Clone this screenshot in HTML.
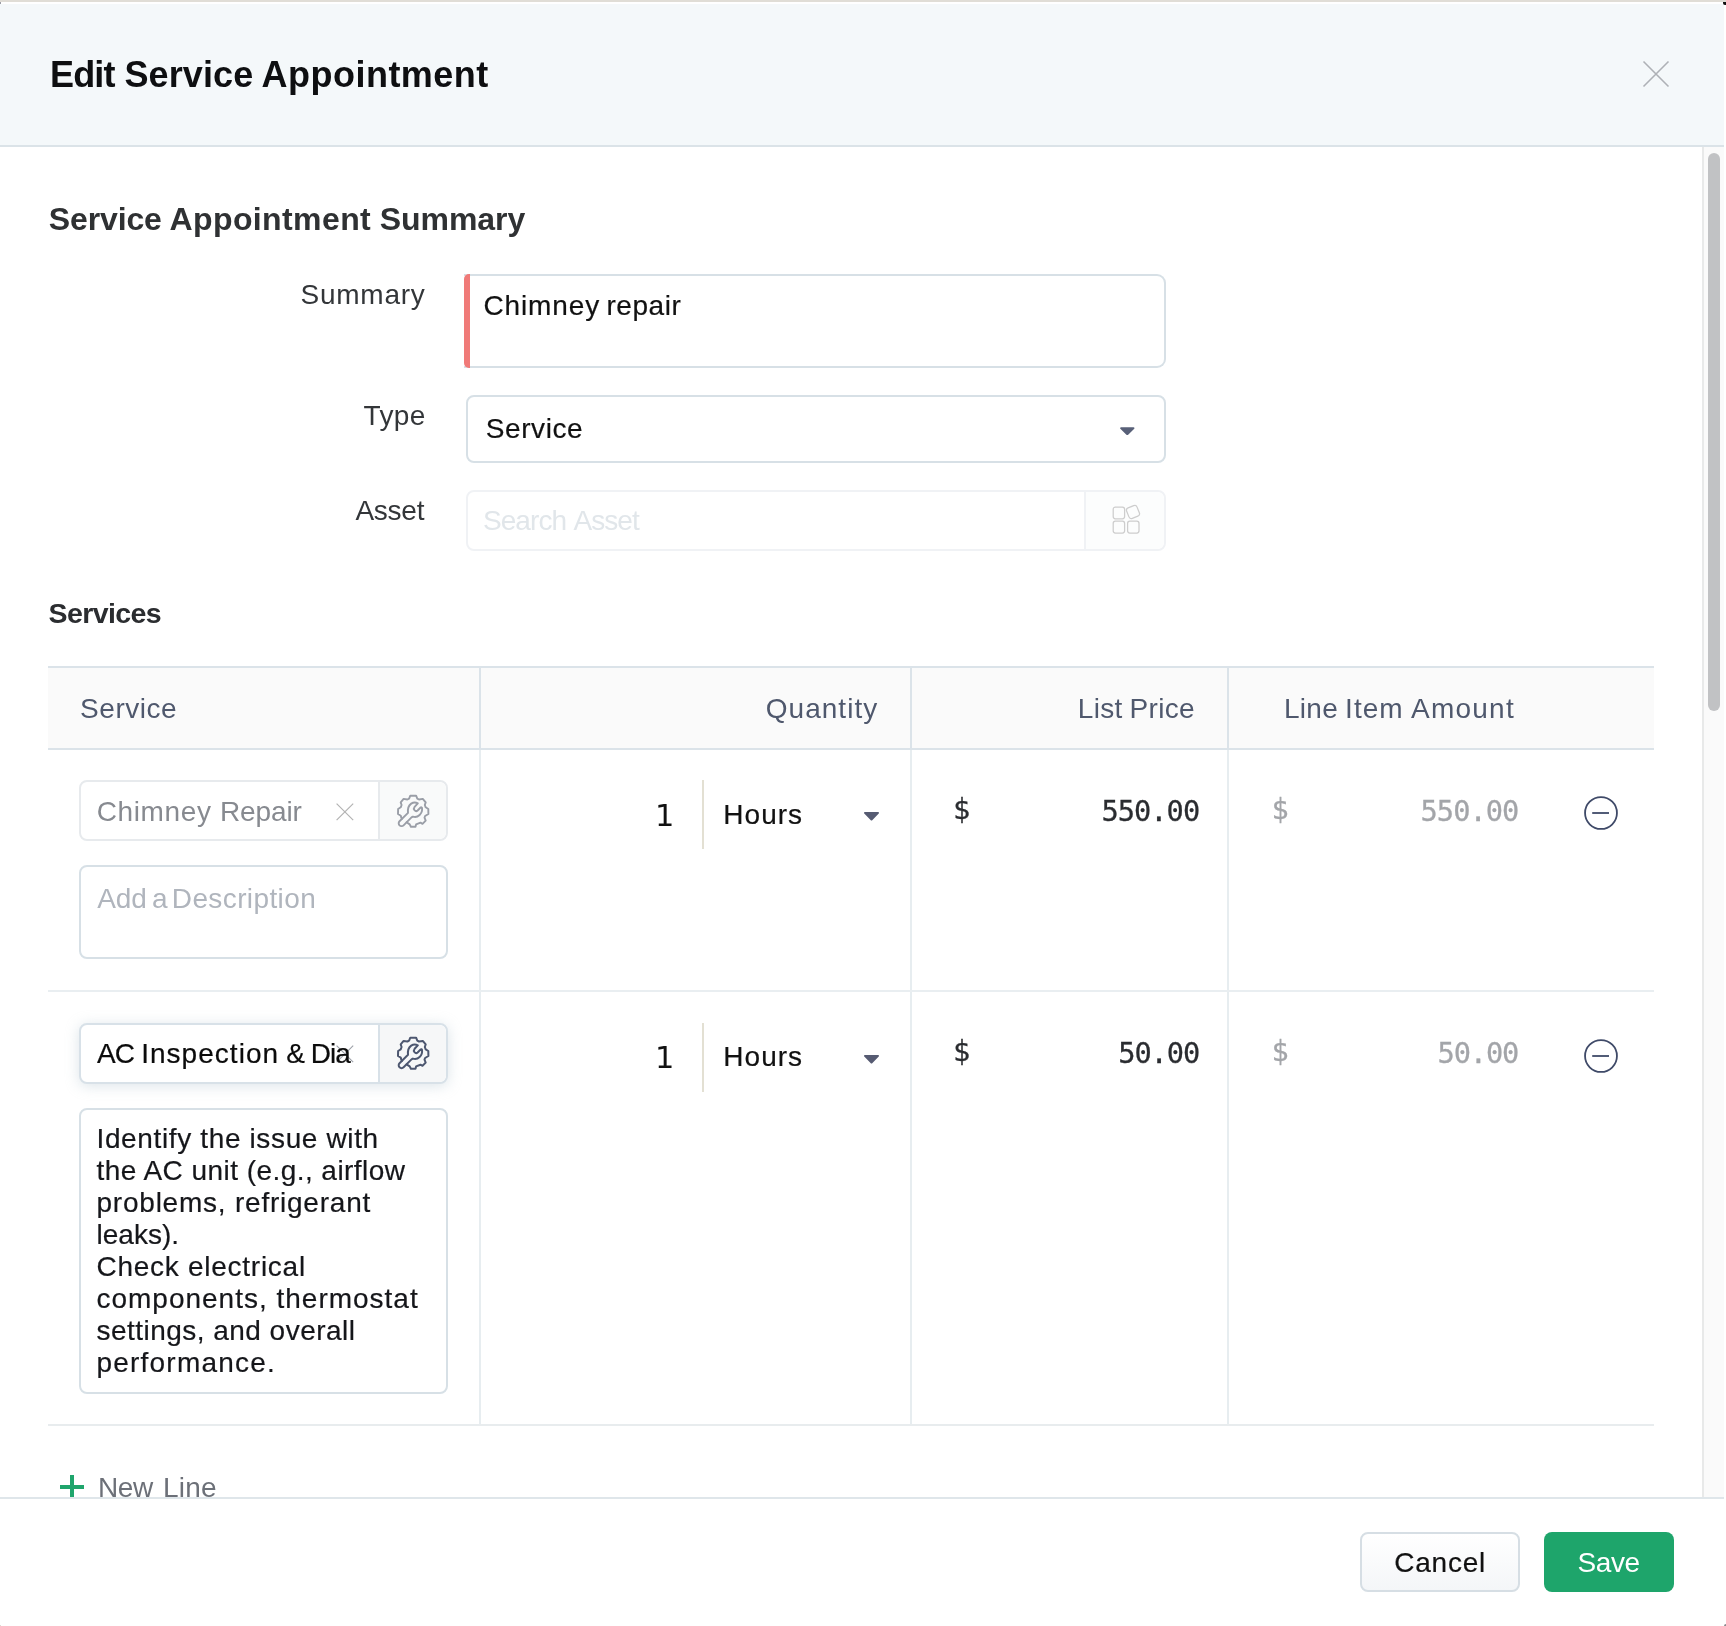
<!DOCTYPE html>
<html lang="en">
<head>
<meta charset="utf-8">
<title>Edit Service Appointment</title>
<style>
*{box-sizing:border-box;margin:0;padding:0}
html,body{width:1726px;height:1626px;overflow:hidden;background:#fff}
body{position:relative;font-family:"Liberation Sans",sans-serif;will-change:transform}
.a{position:absolute}
.g{position:absolute;left:0;top:0;width:0;height:0}
.t{position:absolute;white-space:pre;font-family:"Liberation Sans",sans-serif}
.m{font-family:"DejaVu Sans Mono","Liberation Mono",monospace}
.d{font-family:"DejaVu Sans","Liberation Sans",sans-serif}
.box{position:absolute;border:2px solid #d7e0e6;border-radius:8px;background:#fff}
svg{position:absolute;overflow:visible}
</style>
</head>
<body>
<header>
<div class="a" style="left:0px;top:0px;width:1726px;height:2px;background:#e0ddd6"></div>
<div class="a" style="left:0px;top:4px;width:1724px;height:141px;background:#f4f8fa"></div>
<div class="a" style="left:0px;top:145px;width:1724px;height:2px;background:#dbe3e8"></div>
<div class="a" style="left:1723px;top:2px;width:3px;height:3px;background:#111;border-radius:0 0 0 2px"></div>
<div class="a" style="left:0px;top:2px;width:1px;height:2px;background:#9a9ca4"></div>
<svg style="left:1643px;top:61px" width="26" height="26" viewBox="0 0 26 26"><path d="M0.5 0.5L25.5 25.5M25.5 0.5L0.5 25.5" stroke="#aeb1b6" stroke-width="1.6" fill="none"/></svg>
<div class="g"><span class="t" style="left:49.90px;top:54px;font-size:36px;line-height:41px;font-weight:bold;color:#0e0f11;letter-spacing:-0.768px;">Edit</span> <span class="t" style="left:124.40px;top:54px;font-size:36px;line-height:41px;font-weight:bold;color:#0e0f11;letter-spacing:0.119px;">Service</span> <span class="t" style="left:261.60px;top:54px;font-size:36px;line-height:41px;font-weight:bold;color:#0e0f11;letter-spacing:0.473px;">Appointment</span></div>
</header>
<main>
<div class="a" style="left:1702px;top:147px;width:22px;height:1351px;background:#fafafa;border-left:2px solid #e8e9e9"></div>
<div class="a" style="left:1708px;top:153px;width:12px;height:558px;background:#c1c2c4;border-radius:6px"></div>
<div class="box" style="left:464px;top:274px;width:702px;height:94px;border-left:0;border-radius:0 9px 9px 0"></div>
<div class="a" style="left:464px;top:274px;width:6px;height:94px;background:#f07a78;border-radius:5px 0 0 5px"></div>
<div class="box" style="left:466px;top:395px;width:700px;height:68px;"></div>
<svg style="left:1119.4px;top:426.2px" width="16.6" height="10.2" viewBox="0 0 18 11"><path d="M2.2 1.2h13.6a1 1 0 0 1 .75 1.65l-6.6 6.5a1.3 1.3 0 0 1-1.9 0l-6.6-6.5a1 1 0 0 1 .75-1.65z" fill="#586078"/></svg>
<div class="box" style="left:466px;top:490px;width:700px;height:61px;border-color:#f0f2f5;background:#fff"></div>
<div class="a" style="left:1084px;top:492px;width:80px;height:57px;background:#fcfdfd;border-left:2px solid #f0f2f5;border-radius:0 7px 7px 0"></div>
<svg style="left:1112px;top:505px" width="29" height="30" viewBox="0 0 29 30" fill="none" stroke="#cdcdcd" stroke-width="1.25"><rect x="1.2" y="2" width="11.4" height="11.8" rx="2.2"/><rect x="1.2" y="16.2" width="11.4" height="11.8" rx="2.2"/><rect x="15.6" y="16.2" width="11.4" height="11.8" rx="2.2"/><rect x="15.4" y="1.4" width="11.2" height="11.2" rx="2.6" transform="rotate(-22 21 7)"/></svg>
<div class="a" style="left:48px;top:666px;width:1606px;height:2px;background:#dbe3e9"></div>
<div class="a" style="left:48px;top:668px;width:1606px;height:80px;background:#fafafa"></div>
<div class="a" style="left:48px;top:748px;width:1606px;height:2px;background:#dbe3e9"></div>
<div class="a" style="left:479px;top:668px;width:2px;height:80px;background:#dbe3e9"></div>
<div class="a" style="left:479px;top:750px;width:2px;height:675px;background:#e7edf0"></div>
<div class="a" style="left:910px;top:668px;width:2px;height:80px;background:#dbe3e9"></div>
<div class="a" style="left:910px;top:750px;width:2px;height:675px;background:#e7edf0"></div>
<div class="a" style="left:1227px;top:668px;width:2px;height:80px;background:#dbe3e9"></div>
<div class="a" style="left:1227px;top:750px;width:2px;height:675px;background:#e7edf0"></div>
<div class="a" style="left:48px;top:990px;width:1606px;height:2px;background:#e9eef1"></div>
<div class="a" style="left:48px;top:1424px;width:1606px;height:2px;background:#e8ecee"></div>
<div class="box" style="left:79px;top:780px;width:369px;height:61px;border-color:#e7eaed;"></div>
<div class="a" style="left:378px;top:782px;width:68px;height:57px;background:#f9fafa;border-left:2px solid #e7eaed;border-radius:0 7px 7px 0"></div>
<div class="box" style="left:79px;top:1023px;width:369px;height:61px;border-color:#d8e1e8;box-shadow:0 2px 14px rgba(172,190,203,.42);"></div>
<div class="a" style="left:378px;top:1025px;width:68px;height:57px;background:#f6f7f8;border-left:2px solid #d8e1e8;border-radius:0 7px 7px 0"></div>
<svg style="left:396.6px;top:795.2px" width="33" height="33" viewBox="0 0 33 33" fill="none" stroke="#9a9ea7" stroke-width="1.9" stroke-linejoin="round" stroke-linecap="round"><path d="M9.6 27.3 L12.7 29.4 L13.9 31.7 L18.5 31.7 L19.1 29.4 L23.5 27.7 L25.5 28.8 L28.7 25.6 L27.5 22.7 L28.1 21.0 L31.4 19.0 L31.3 14.0 L28.7 12.3 L27.8 10.0 L28.7 7.4 L25.8 3.9 L22.0 4.5 L20.3 3.6 L19.1 0.7 L13.3 0.7 L12.1 3.6 L10.4 4.5 L6.6 3.9 L3.7 7.4 L4.6 10.0 L3.7 12.3 L1.1 14.0 L1.0 19.0 L3.8 20.7 L4.3 22.7 L5.0 23.8"/><path d="M2.53 26.28 L11 17.8 C10.6 14 11.5 10.5 14.2 8.6 C16.2 7.3 18.8 7.2 20.8 8.4 L17.6 11.8 C16.8 12.8 16.8 14.3 17.5 15.2 C18.3 16.1 19.8 16.2 20.6 15.5 L23.6 12.5 C24.1 12 24.9 12.3 25 13 C25.4 15.5 24.4 18.3 22.6 20 C20.6 21.9 18 22.3 15.9 21.6 L14.5 22.4 L6.57 30.32 A2.85 2.85 0 0 1 2.53 26.28 Z"/></svg>
<svg style="left:396.6px;top:1036.5px" width="33" height="33" viewBox="0 0 33 33" fill="none" stroke="#4d5770" stroke-width="2.0" stroke-linejoin="round" stroke-linecap="round"><path d="M9.6 27.3 L12.7 29.4 L13.9 31.7 L18.5 31.7 L19.1 29.4 L23.5 27.7 L25.5 28.8 L28.7 25.6 L27.5 22.7 L28.1 21.0 L31.4 19.0 L31.3 14.0 L28.7 12.3 L27.8 10.0 L28.7 7.4 L25.8 3.9 L22.0 4.5 L20.3 3.6 L19.1 0.7 L13.3 0.7 L12.1 3.6 L10.4 4.5 L6.6 3.9 L3.7 7.4 L4.6 10.0 L3.7 12.3 L1.1 14.0 L1.0 19.0 L3.8 20.7 L4.3 22.7 L5.0 23.8"/><path d="M2.53 26.28 L11 17.8 C10.6 14 11.5 10.5 14.2 8.6 C16.2 7.3 18.8 7.2 20.8 8.4 L17.6 11.8 C16.8 12.8 16.8 14.3 17.5 15.2 C18.3 16.1 19.8 16.2 20.6 15.5 L23.6 12.5 C24.1 12 24.9 12.3 25 13 C25.4 15.5 24.4 18.3 22.6 20 C20.6 21.9 18 22.3 15.9 21.6 L14.5 22.4 L6.57 30.32 A2.85 2.85 0 0 1 2.53 26.28 Z"/></svg>
<svg style="left:336px;top:803px" width="18" height="18" viewBox="0 0 18 18"><path d="M0.6 0.6L17.2 17.2M17.2 0.6L0.6 17.2" stroke="#b3b3b3" stroke-width="1.2" fill="none"/></svg>
<svg style="left:336px;top:1045px" width="18" height="18" viewBox="0 0 18 18"><path d="M0.6 0.6L17.2 17.2M17.2 0.6L0.6 17.2" stroke="#7d828c" stroke-width="1.1" fill="none" opacity=".75"/></svg>
<div class="box" style="left:79px;top:865px;width:369px;height:94px;"></div>
<div class="box" style="left:79px;top:1108px;width:369px;height:286px;"></div>
<div class="a" style="left:702px;top:780px;width:2px;height:69px;background:#e3e0d3"></div>
<svg style="left:863px;top:811px" width="17" height="11" viewBox="0 0 17 11"><path d="M1.9 1h13.2a.9.9 0 0 1 .65 1.55l-6.3 6.4a1.3 1.3 0 0 1-1.9 0L1.25 2.55A.9.9 0 0 1 1.9 1z" fill="#565b72"/></svg>
<div class="a" style="left:702px;top:1023px;width:2px;height:69px;background:#e3e0d3"></div>
<svg style="left:863px;top:1054px" width="17" height="11" viewBox="0 0 17 11"><path d="M1.9 1h13.2a.9.9 0 0 1 .65 1.55l-6.3 6.4a1.3 1.3 0 0 1-1.9 0L1.25 2.55A.9.9 0 0 1 1.9 1z" fill="#565b72"/></svg>
<svg style="left:1583px;top:795.0px" width="36" height="36" viewBox="0 0 36 36" fill="none" stroke="#3f4a68" stroke-width="1.8"><circle cx="18" cy="18" r="15.95"/><path d="M9.2 18h16.8"/></svg>
<svg style="left:1583px;top:1038.0px" width="36" height="36" viewBox="0 0 36 36" fill="none" stroke="#3f4a68" stroke-width="1.8"><circle cx="18" cy="18" r="15.95"/><path d="M9.2 18h16.8"/></svg>
<svg style="left:60.1px;top:1475px" width="24" height="24" viewBox="0 0 24 24"><path d="M12 0v24M0 12h24" stroke="#1fa56c" stroke-width="4" fill="none"/></svg>
<div class="g"><span class="t" style="left:48.80px;top:201px;font-size:32px;line-height:36px;font-weight:bold;color:#2f3133;letter-spacing:-0.130px;">Service</span> <span class="t" style="left:169.50px;top:201px;font-size:32px;line-height:36px;font-weight:bold;color:#2f3133;letter-spacing:0.396px;">Appointment</span> <span class="t" style="left:379.80px;top:201px;font-size:32px;line-height:36px;font-weight:bold;color:#2f3133;letter-spacing:-0.058px;">Summary</span></div>
<div class="t" style="left:300.60px;top:279px;font-size:28px;line-height:31px;color:#333639;letter-spacing:0.735px;">Summary</div>
<div class="g"><span class="t" style="left:483.50px;top:290px;font-size:28px;line-height:31px;color:#111;letter-spacing:0.870px;-webkit-text-stroke:0.2px #111;">Chimney</span> <span class="t" style="left:606.50px;top:290px;font-size:28px;line-height:31px;color:#111;letter-spacing:0.548px;-webkit-text-stroke:0.2px #111;">repair</span></div>
<div class="t" style="left:363.50px;top:400px;font-size:28px;line-height:31px;color:#333639;letter-spacing:0.390px;">Type</div>
<div class="t" style="left:485.70px;top:413px;font-size:28px;line-height:31px;color:#111;letter-spacing:0.601px;-webkit-text-stroke:0.2px #111;">Service</div>
<div class="t" style="left:355.40px;top:495px;font-size:28px;line-height:31px;color:#333639;letter-spacing:-0.237px;">Asset</div>
<div class="g"><span class="t" style="left:482.88px;top:505px;font-size:28px;line-height:31px;color:#e1e6ea;letter-spacing:-0.900px;">Search</span> <span class="t" style="left:573.38px;top:505px;font-size:28px;line-height:31px;color:#e1e6ea;letter-spacing:-0.900px;">Asset</span></div>
<div class="t" style="left:48.60px;top:597px;font-size:28.5px;line-height:32px;font-weight:bold;color:#2b2d30;letter-spacing:-0.603px;">Services</div>
<div class="t" style="left:80.10px;top:693px;font-size:28px;line-height:31px;color:#4f586d;letter-spacing:0.535px;">Service</div>
<div class="t" style="left:765.70px;top:693px;font-size:28px;line-height:31px;color:#4f586d;letter-spacing:1.046px;">Quantity</div>
<div class="g"><span class="t" style="left:1077.70px;top:693px;font-size:28px;line-height:31px;color:#4f586d;letter-spacing:0.369px;">List</span> <span class="t" style="left:1129.50px;top:693px;font-size:28px;line-height:31px;color:#4f586d;letter-spacing:0.345px;">Price</span></div>
<div class="g"><span class="t" style="left:1283.90px;top:693px;font-size:28px;line-height:31px;color:#4f586d;letter-spacing:0.345px;">Line</span> <span class="t" style="left:1345.10px;top:693px;font-size:28px;line-height:31px;color:#4f586d;letter-spacing:1.023px;">Item</span> <span class="t" style="left:1411.00px;top:693px;font-size:28px;line-height:31px;color:#4f586d;letter-spacing:1.237px;">Amount</span></div>
<div class="g"><span class="t" style="left:96.80px;top:796px;font-size:28px;line-height:31px;color:#878a90;letter-spacing:0.603px;">Chimney</span> <span class="t" style="left:219.90px;top:796px;font-size:28px;line-height:31px;color:#878a90;letter-spacing:-0.092px;">Repair</span></div>
<div class="t d" style="left:655.00px;top:798px;font-size:30.4px;line-height:35px;color:#111;letter-spacing:0.000px;">1</div>
<div class="t" style="left:723.30px;top:799px;font-size:28px;line-height:31px;color:#111;letter-spacing:1.028px;-webkit-text-stroke:0.2px #111;">Hours</div>
<div class="g"><span class="t" style="left:97.20px;top:883px;font-size:28px;line-height:31px;color:#b0b5bd;letter-spacing:-0.124px;">Add</span> <span class="t" style="left:152.00px;top:883px;font-size:28px;line-height:31px;color:#b0b5bd;letter-spacing:0.000px;">a</span> <span class="t" style="left:171.80px;top:883px;font-size:28px;line-height:31px;color:#b0b5bd;letter-spacing:0.392px;">Description</span></div>
<div class="g"><span class="t" style="left:97.06px;top:1038px;font-size:28px;line-height:31px;color:#0b0b0b;letter-spacing:-0.900px;-webkit-text-stroke:0.2px #0b0b0b;">AC</span> <span class="t" style="left:141.20px;top:1038px;font-size:28px;line-height:31px;color:#0b0b0b;letter-spacing:1.026px;-webkit-text-stroke:0.2px #0b0b0b;">Inspection</span> <span class="t" style="left:286.30px;top:1038px;font-size:28px;line-height:31px;color:#0b0b0b;letter-spacing:0.000px;-webkit-text-stroke:0.2px #0b0b0b;">&amp;</span> <span class="t" style="left:310.73px;top:1038px;font-size:28px;line-height:31px;color:#0b0b0b;letter-spacing:-0.900px;-webkit-text-stroke:0.2px #0b0b0b;">Dia</span></div>
<div class="t d" style="left:655.00px;top:1040px;font-size:30.4px;line-height:35px;color:#111;letter-spacing:0.000px;">1</div>
<div class="t" style="left:723.30px;top:1041px;font-size:28px;line-height:31px;color:#111;letter-spacing:1.028px;-webkit-text-stroke:0.2px #111;">Hours</div>
<div class="g"><span class="t" style="left:96.50px;top:1123px;font-size:28px;line-height:31px;color:#15161a;letter-spacing:0.635px;-webkit-text-stroke:0.2px #15161a;">Identify the issue with</span> <span class="t" style="left:96.50px;top:1155px;font-size:28px;line-height:31px;color:#15161a;letter-spacing:0.449px;-webkit-text-stroke:0.2px #15161a;">the AC unit (e.g., airflow</span> <span class="t" style="left:96.50px;top:1187px;font-size:28px;line-height:31px;color:#15161a;letter-spacing:0.772px;-webkit-text-stroke:0.2px #15161a;">problems, refrigerant</span> <span class="t" style="left:96.50px;top:1219px;font-size:28px;line-height:31px;color:#15161a;letter-spacing:0.018px;-webkit-text-stroke:0.2px #15161a;">leaks).</span> <span class="t" style="left:96.50px;top:1251px;font-size:28px;line-height:31px;color:#15161a;letter-spacing:0.733px;-webkit-text-stroke:0.2px #15161a;">Check electrical</span> <span class="t" style="left:96.50px;top:1283px;font-size:28px;line-height:31px;color:#15161a;letter-spacing:0.991px;-webkit-text-stroke:0.2px #15161a;">components, thermostat</span> <span class="t" style="left:96.50px;top:1315px;font-size:28px;line-height:31px;color:#15161a;letter-spacing:0.469px;-webkit-text-stroke:0.2px #15161a;">settings, and overall</span> <span class="t" style="left:96.50px;top:1347px;font-size:28px;line-height:31px;color:#15161a;letter-spacing:1.210px;-webkit-text-stroke:0.2px #15161a;">performance.</span></div>
<div class="g"><span class="t" style="left:98.00px;top:1472px;font-size:28px;line-height:31px;color:#6c7078;letter-spacing:-0.396px;">New</span> <span class="t" style="left:163.00px;top:1472px;font-size:28px;line-height:31px;color:#6c7078;letter-spacing:0.245px;">Line</span></div>
<div class="t m" style="left:952.90px;top:792px;font-size:28.7px;line-height:34px;color:#2a2c30;letter-spacing:0.000px;-webkit-text-stroke:0.28px #2a2c30;">$</div>
<div class="t m" style="left:1101.50px;top:794px;font-size:28.7px;line-height:34px;color:#2a2c30;letter-spacing:-0.991px;-webkit-text-stroke:0.28px #2a2c30;">550.00</div>
<div class="t m" style="left:1271.60px;top:792px;font-size:28.7px;line-height:34px;color:#a3a5a9;letter-spacing:0.000px;-webkit-text-stroke:0.28px #a3a5a9;">$</div>
<div class="t m" style="left:1420.50px;top:794px;font-size:28.7px;line-height:34px;color:#a3a5a9;letter-spacing:-0.951px;-webkit-text-stroke:0.28px #a3a5a9;">550.00</div>
<div class="t m" style="left:952.90px;top:1034px;font-size:28.7px;line-height:34px;color:#2a2c30;letter-spacing:0.000px;-webkit-text-stroke:0.28px #2a2c30;">$</div>
<div class="t m" style="left:1118.20px;top:1036px;font-size:28.7px;line-height:34px;color:#2a2c30;letter-spacing:-1.071px;-webkit-text-stroke:0.28px #2a2c30;">50.00</div>
<div class="t m" style="left:1271.60px;top:1034px;font-size:28.7px;line-height:34px;color:#a3a5a9;letter-spacing:0.000px;-webkit-text-stroke:0.28px #a3a5a9;">$</div>
<div class="t m" style="left:1437.50px;top:1036px;font-size:28.7px;line-height:34px;color:#a3a5a9;letter-spacing:-1.121px;-webkit-text-stroke:0.28px #a3a5a9;">50.00</div>
</main>
<footer>
<div class="a" style="left:0px;top:1497px;width:1724px;height:129px;background:#fff"></div>
<div class="a" style="left:0px;top:1497px;width:1724px;height:2px;background:#dfe6ea"></div>
<div class="box" style="left:1360px;top:1532px;width:160px;height:60px;background:linear-gradient(#fff,#f4f6f8);border-color:#d6dee4"></div>
<div class="a" style="left:1544px;top:1532px;width:130px;height:60px;background:#1ea56b;border-radius:8px"></div>
<div class="a" style="left:1724px;top:1624px;width:2px;height:2px;background:#8a8a8e;border-radius:2px 0 0 0"></div>
<div class="a" style="left:0px;top:1625px;width:1px;height:1px;background:#dddad2"></div>
<div class="t" style="left:1394.30px;top:1547px;font-size:28px;line-height:31px;color:#111;letter-spacing:0.753px;-webkit-text-stroke:0.2px #111;">Cancel</div>
<div class="t" style="left:1577.50px;top:1547px;font-size:28px;line-height:31px;color:#fff;letter-spacing:-0.383px;">Save</div>
</footer>
</body>
</html>
